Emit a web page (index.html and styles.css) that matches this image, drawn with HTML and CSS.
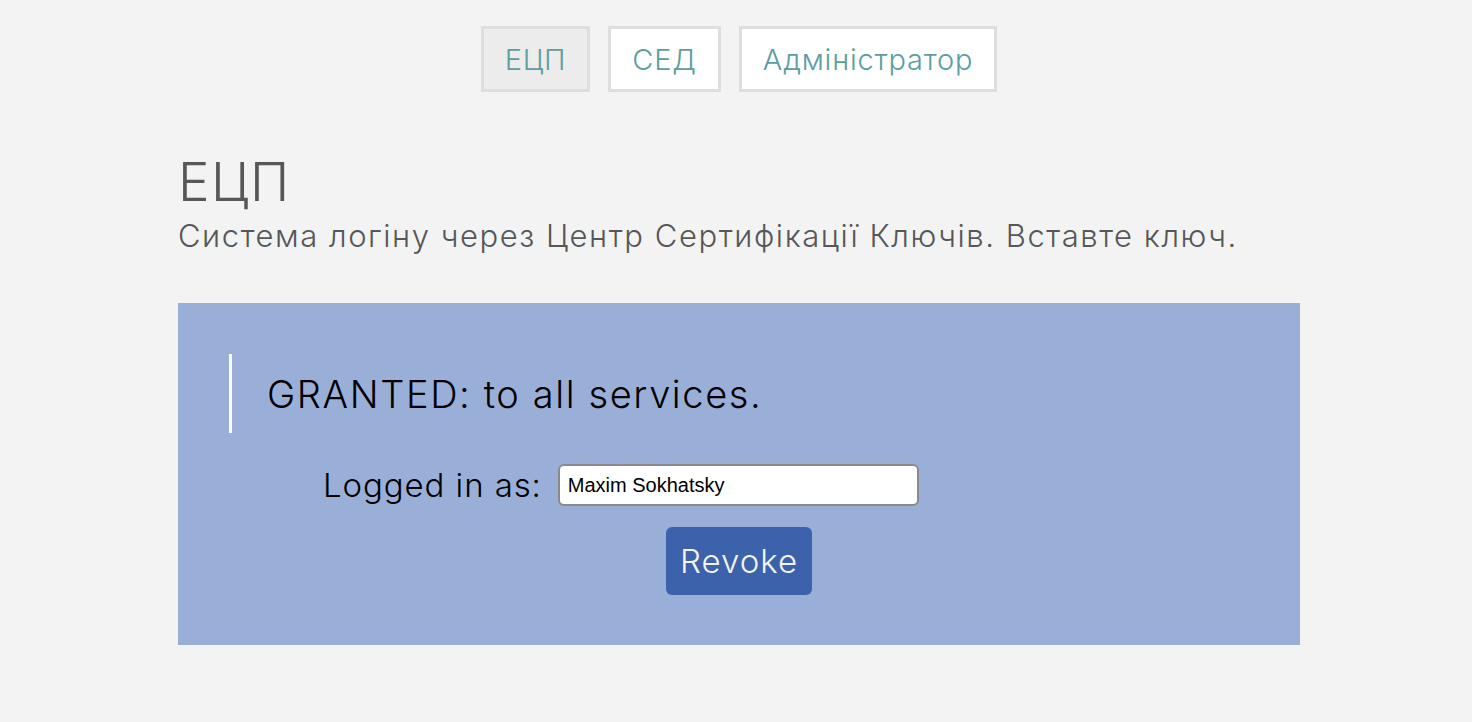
FILE: index.html
```html
<!DOCTYPE html>
<html lang="uk">
<head>
<meta charset="utf-8">
<title>ЕЦП</title>
<link rel="stylesheet" href="styles.css">
</head>
<body>
<div class="page">
  <nav class="tabs">
    <a class="tab active" href="#">ЕЦП</a>
    <a class="tab" href="#">СЕД</a>
    <a class="tab" href="#">Адміністратор</a>
  </nav>
  <main class="content">
    <h1 class="title">ЕЦП</h1>
    <p class="subtitle">Система логіну через Центр Сертифікації Ключів. Вставте ключ.</p>
    <section class="panel">
      <blockquote class="status">GRANTED: to all services.</blockquote>
      <div class="login-row">
        <label class="login-label" for="user">Logged in as:</label>
        <input class="login-input" id="user" type="text" value="Maxim Sokhatsky">
      </div>
      <div class="actions">
        <button class="revoke" type="button">Revoke</button>
      </div>
    </section>
  </main>
</div>
</body>
</html>
```
FILE: styles.css
```css
html, body {
  margin: 0;
  padding: 0;
  background: #f3f3f3;
}
body {
  font-family: Inter, "Noto Sans", sans-serif;
  font-weight: 300;
  padding-left: 6px;
}
.page {
  display: flex;
  flex-direction: column;
  align-items: center;
}
.tabs {
  display: flex;
  gap: 18px;
  margin-top: 26px;
}
.tab {
  display: flex;
  align-items: center;
  justify-content: center;
  height: 60px;
  padding: 0 21px;
  border: 3px solid #dedede;
  background: #ffffff;
  color: #5b9ea0;
  font-size: 29px;
  letter-spacing: 0.8px;
  text-decoration: none;
}
.tab.active {
  background: #ececec;
}
.content {
  width: 1122px;
}
.title {
  margin: 58px 0 0 0;
  font-size: 53px;
  font-weight: 300;
  color: #575757;
  line-height: 64px;
  letter-spacing: 1.5px;
}
.subtitle {
  margin: 0;
  font-size: 31px;
  color: #575757;
  line-height: 44px;
  letter-spacing: 1.55px;
}
.panel {
  margin-top: 45px;
  background: #9aafd8;
  padding: 51px 0 50px 51px;
  box-sizing: border-box;
  height: 342px;
}
.status {
  margin: 0;
  border-left: 3px solid #ffffff;
  padding-left: 35px;
  height: 79px;
  display: flex;
  align-items: center;
  font-size: 38px;
  letter-spacing: 1.6px;
  color: #000;
  font-weight: 300;
}
.login-row {
  display: flex;
  align-items: center;
  margin-top: 31px;
  padding-left: 94px;
  gap: 16px;
}
.login-label {
  font-size: 33px;
  letter-spacing: 0.9px;
  color: #000;
}
.login-input {
  width: 361px;
  height: 42px;
  box-sizing: border-box;
  border: 2px solid #8a8a8a;
  border-radius: 6px;
  background: #fff;
  padding: 0 8px;
  font-family: "Liberation Sans", Arial, sans-serif;
  font-size: 20px;
  color: #000;
}
.actions {
  display: flex;
  justify-content: center;
  margin-top: 21px;
  padding-right: 51px;
}
.revoke {
  width: 146px;
  height: 68px;
  border: none;
  border-radius: 6px;
  background: #3d62ac;
  color: #f4f4f4;
  font-family: Inter, "Noto Sans", sans-serif;
  font-weight: 300;
  font-size: 33px;
  letter-spacing: 1px;
  padding: 0;
}
```
